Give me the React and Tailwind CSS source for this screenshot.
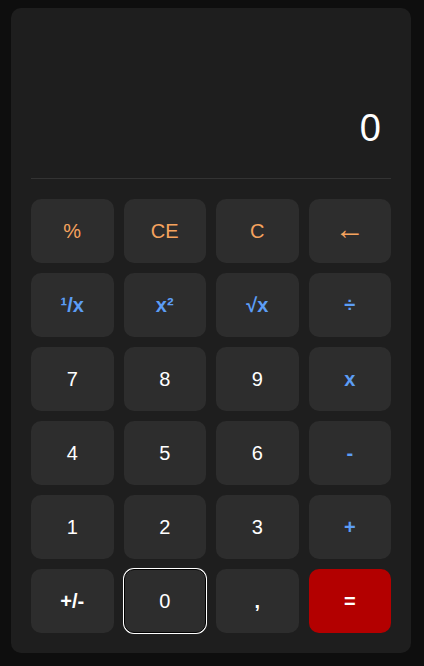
import { useState } from 'react';

const keys = [
  { label: '%', kind: 'fn' },
  { label: 'CE', kind: 'fn' },
  { label: 'C', kind: 'fn' },
  { label: '←', kind: 'fn', big: true },
  { label: '¹/x', kind: 'op' },
  { label: 'x²', kind: 'op' },
  { label: '√x', kind: 'op' },
  { label: '÷', kind: 'op' },
  { label: '7', kind: 'num' },
  { label: '8', kind: 'num' },
  { label: '9', kind: 'num' },
  { label: 'x', kind: 'op' },
  { label: '4', kind: 'num' },
  { label: '5', kind: 'num' },
  { label: '6', kind: 'num' },
  { label: '-', kind: 'op' },
  { label: '1', kind: 'num' },
  { label: '2', kind: 'num' },
  { label: '3', kind: 'num' },
  { label: '+', kind: 'op' },
  { label: '+/-', kind: 'bold' },
  { label: '0', kind: 'num', focused: true },
  { label: ',', kind: 'bold' },
  { label: '=', kind: 'eq' },
];

const styles = {
  fn: 'bg-[#2d2d2d] text-[#f6a35e] font-normal',
  op: 'bg-[#2d2d2d] text-[#5c9df5] font-bold',
  num: 'bg-[#2d2d2d] text-white font-normal',
  bold: 'bg-[#2d2d2d] text-white font-bold',
  eq: 'bg-[#b30000] text-white font-bold',
};

const App = () => {
  const [display] = useState('0');

  return (
    <div className="min-h-[666px] bg-[#0e0e0e] pt-2 pl-[11px]" style={{ fontFamily: '"Liberation Sans", Arial, sans-serif' }}>
      <div className="w-[400px] rounded-[10px] bg-[#1e1e1e] p-5">
        {/* display */}
        <div className="h-[151px] border-b border-[#333333] flex items-end justify-end pr-[10px] pb-[31px]">
          <span className="text-[38px] leading-none text-white">{display}</span>
        </div>

        {/* keypad */}
        <div className="mt-5 grid grid-cols-4 gap-[10px]">
          {keys.map((k) => (
            <button
              key={k.label}
              className={`h-16 rounded-[10px] flex items-center justify-center ${styles[k.kind]} ${
                k.big ? 'text-[30px] leading-none pb-1' : 'text-[20px]'
              } ${k.focused ? 'border border-black shadow-[0_0_0_1px_#ffffff]' : ''}`}
            >
              {k.label}
            </button>
          ))}
        </div>
      </div>
    </div>
  );
};

export default App;
